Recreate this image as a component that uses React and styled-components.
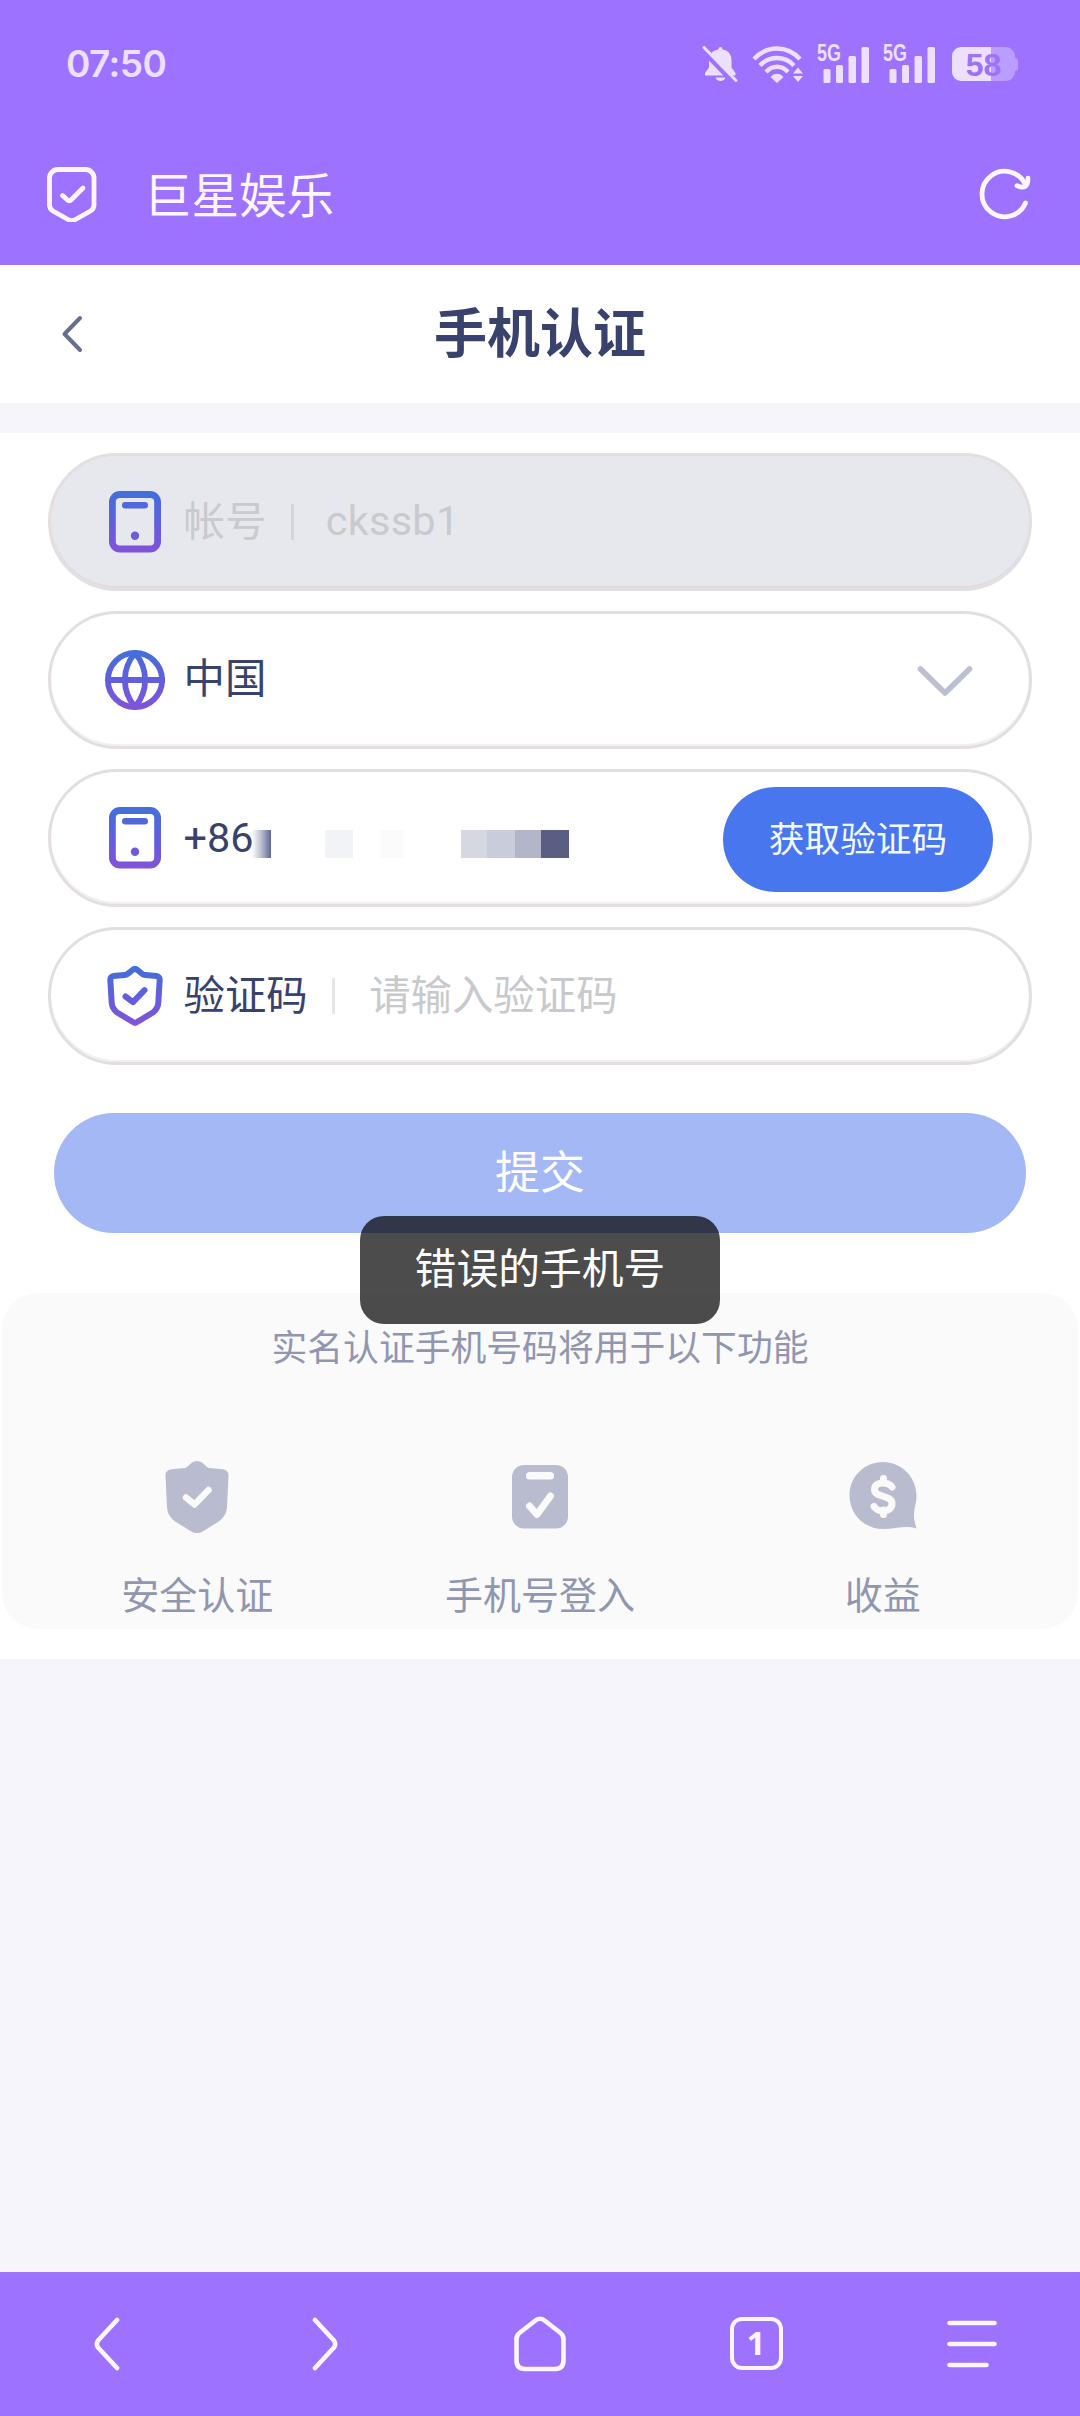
import React from "react"

import styled, { createGlobalStyle } from "styled-components"

const GlobalStyle = createGlobalStyle`
  * {
    box-sizing: border-box;
  }

  body {
    margin: 0;
    background: #f5f5fb;
    font-family: Roboto, "Noto Sans CJK SC", sans-serif;
  }

  svg {
    display: block;
    flex: none;
  }
`

const Screen = styled.div`
  width: 1080px;
  height: 2416px;
  display: flex;
  flex-direction: column;
  background: #f5f5fb;
`

const TopBar = styled.header`
  height: 265px;
  background: #9d72ff;
`

const StatusBar = styled.div`
  height: 128px;
  padding: 0 62px 0 66px;
  display: flex;
  align-items: center;
  color: #ede0ff;
`

const Time = styled.time`
  flex: 1;
  font: 600 37px/40px Inter, sans-serif;
  letter-spacing: -0.6px;
`

const StatusIcons = styled.div`
  display: flex;
  align-items: center;
`

const Signal = styled.div`
  position: relative;
  width: 53px;
  height: 38px;
  margin-left: 13px;
`

const Network = styled.span`
  position: absolute;
  top: 0;
  left: 0;
  font: 700 23px/17px "Liberation Sans", sans-serif;
  transform: scaleX(0.78);
  transform-origin: left;
`

const Battery = styled.div`
  width: 63px;
  height: 34px;
  margin-left: 16px;
  border-radius: 9px;
  background: linear-gradient(to right, #ede0ff 39px, #bb9cff 39px);
  color: #9d72f8;
  font: 700 32px/36px "Liberation Sans", sans-serif;
  text-align: center;
`

const BatteryTip = styled.i`
  width: 3px;
  height: 13px;
  border-radius: 0 3px 3px 0;
  background: #bb9cff;
`

const BrowserBar = styled.div`
  height: 130px;
  padding: 1px 48px 0 46px;
  display: flex;
  align-items: center;
`

const SiteName = styled.span`
  flex: 1;
  margin-left: 46px;
  padding-top: 6px;
  color: #fff6ff;
  font-size: 47.5px;
  line-height: 60px;
`

const PageHeader = styled.div`
  height: 138px;
  padding: 0 60px;
  display: grid;
  grid-template-columns: 60px 1fr 60px;
  align-items: center;
  background: #fff;
`

const Title = styled.h1`
  margin: 1px 0 0;
  color: #38426d;
  font-size: 53px;
  line-height: 60px;
  font-weight: 700;
  text-align: center;
`

const Content = styled.main`
  height: 1226px;
  margin-top: 30px;
  padding-top: 20px;
  background: #fff;
`

const Form = styled.form`
  padding: 0 48px;
  display: flex;
  flex-direction: column;
  gap: 20px;
`

const Field = styled.div`
  height: 138px;
  padding: 0 36px 0 54px;
  display: flex;
  align-items: center;
  border: 3px solid #e3dfe0;
  border-radius: 70px;
  background: ${({ $disabled }) => ($disabled ? "#e7e8ee" : "#fff")};
  box-shadow: inset 0 -2px 0 ${({ $disabled }) => ($disabled ? "#dddde1" : "#f1efef")};
  color: ${({ $disabled }) => ($disabled ? "#c9cacd" : "#38426d")};
  font-size: 41.4px;
  line-height: 50px;
`

const FieldIcon = styled.span`
  width: 60px;
  margin-right: 18.5px;
  display: flex;
  justify-content: center;
`

const Divider = styled.i`
  width: 3px;
  height: 36px;
  margin: 0 32px 0 24.5px;
  background: ${({ $dark }) => ($dark ? "#d4d4dc" : "#e6e6e8")};
`

const Placeholder = styled.span`
  margin-left: 2px;
  color: #c8c9cc;
`

const Value = styled.span`
  flex: 1;
  letter-spacing: ${({ $spacing }) => $spacing || 0};
  padding-bottom: 2px;
`

const Mosaic = styled.span`
  flex: 1;
  margin: 12px 0 0 -2px;
  display: flex;
`

const Tile = styled.i`
  width: ${({ $width }) => $width}px;
  height: 28px;
  margin-left: ${({ $gap }) => $gap || 0}px;
  background: ${({ $fill }) => $fill};
`

const CodeButton = styled.button`
  width: 270px;
  height: 105px;
  margin-top: 3px;
  padding: 1px 0 0;
  border: 0;
  border-radius: 53px;
  background: #4876ee;
  color: #f4fbff;
  font: 400 35.7px/44px Roboto, "Noto Sans CJK SC", sans-serif;
`

const Submit = styled.button`
  height: 120px;
  margin: 28px 6px 0;
  padding: 2px 0 0;
  border: 0;
  border-radius: 60px;
  background: #a3b8f5;
  color: #fff;
  font: 400 45px/54px Roboto, "Noto Sans CJK SC", sans-serif;
`

const Toast = styled.div`
  position: absolute;
  top: 1216px;
  left: 360px;
  width: 360px;
  height: 108px;
  display: flex;
  align-items: center;
  justify-content: center;
  border-radius: 24px;
  background: rgba(0, 0, 0, 0.7);
  color: #fff;
  font-size: 41.8px;
  line-height: 50px;
`

const Features = styled.section`
  height: 336px;
  margin: 60px 2px 0;
  padding: 34px 24px 0;
  border-radius: 36px;
  background: #fafafa;
  color: #9196b0;
`

const FeaturesTitle = styled.p`
  margin: 0;
  font-size: 35.8px;
  line-height: 44px;
  text-align: center;
`

const FeatureList = styled.div`
  margin-top: 90px;
  display: grid;
  grid-template-columns: repeat(3, 1fr);
`

const Feature = styled.div`
  display: flex;
  flex-direction: column;
  align-items: center;
  gap: 39px;
  font-size: 38px;
  line-height: 48px;
`

const NavBar = styled.nav`
  height: 144px;
  margin-top: auto;
  padding-bottom: 1px;
  display: grid;
  grid-template-columns: repeat(5, 1fr);
  align-items: center;
  justify-items: center;
  background: #9d72ff;
`

const TabCount = styled.span`
  width: 53px;
  height: 53px;
  border: 4.5px solid #fff6ff;
  border-radius: 12px;
  color: #fff6ff;
  font: 700 33px/43px "Noto Sans", sans-serif;
  text-align: center;
`

const Gradient = ({ id, y1, y2 }) => (
  <defs>
    <linearGradient id={id} gradientUnits="userSpaceOnUse" x1="0" y1={y1} x2="0" y2={y2}>
      <stop offset="0" stopColor="#4270da" />
      <stop offset="0.5" stopColor="#615fdd" />
      <stop offset="1" stopColor="#8452d8" />
    </linearGradient>
  </defs>
)

const MutedBell = () => (
  <svg width="36" height="36" viewBox="0 0 36 36" fill="#ede0ff">
    <path d="M16.500 3a1.500 1.500 0 0 1 4 0v.5c6 1 9 5 9 11v7l4 5.500v2.500H3v-2.500l4-5.500v-7c0-6 3-10 9.500-11z" />
    <path d="M13.500 31.500h10c-1 4.500-9 4.500-10 0z" />
    <path d="M0 3.500L33 37.500" stroke="#9d72ff" strokeWidth="5.500" />
    <path d="M2 1.500L34 34.500" stroke="#ede0ff" strokeWidth="3" strokeLinecap="round" />
  </svg>
)

const WifiIcon = styled.svg`
  margin-left: 14px;
`

const Wifi = () => (
  <WifiIcon width="52" height="37" viewBox="0 0 52 37" fill="none">
    <g stroke="#ede0ff" strokeWidth="4.400">
      <path d="M2 13C15 -1 35 -1 48 13" />
      <path d="M8 19.500C17 9.500 33 9.500 42 19.500" />
      <path d="M14 26C20 19 30 19 36 26" />
    </g>
    <path d="M18.500 31c3.500-4.500 9.500-4.500 13 0L25 37z" fill="#ede0ff" />
    <path d="M46 21.500l5 6H41zM46 36l5-6H41z" fill="#ede0ff" />
  </WifiIcon>
)

const SignalBars = () => (
  <Signal>
    <Network>5G</Network>
    <svg width="53" height="38" viewBox="0 0 53 38" fill="#ede0ff">
      <rect x="6.500" y="24" width="7" height="14" rx="1.500" />
      <rect x="19" y="20" width="7" height="18" rx="1.500" />
      <rect x="31.500" y="11" width="7.500" height="27" rx="1.500" />
      <rect x="44.500" y="2" width="7.500" height="36" rx="1.500" />
    </svg>
  </Signal>
)

const BrowserShield = () => (
  <svg
    width="52"
    height="56"
    viewBox="0 0 52 56"
    fill="none"
    stroke="#fff6ff"
    strokeWidth="4.800"
    strokeLinecap="round"
    strokeLinejoin="round"
  >
    <path d="M12 3.500h27.500a8.500 8.500 0 0 1 8.500 8.500v27c0 3-1 4.500-3.500 6l-15 8.500c-2.500 1.500-5 1.500-7.500 0l-15-8.500c-2.500-1.500-3.500-3-3.500-6V12a8.500 8.500 0 0 1 8.500-8.500z" />
    <path d="M16.500 29.500l5 4.500c1 1 2.500 1 3.500 0l12-12" />
  </svg>
)

const Refresh = () => (
  <svg
    width="54"
    height="54"
    viewBox="0 0 54 54"
    fill="none"
    stroke="#fff6ff"
    strokeWidth="4.800"
    strokeLinecap="round"
    strokeLinejoin="round"
  >
    <path d="M47.500 36A22.700 22.700 0 1 1 47.500 18" />
    <path d="M39 18.700c7 2.800 10.800 2.200 11-7.500" />
  </svg>
)

const PhoneIcon = ({ id }) => (
  <svg width="52" height="62" viewBox="0 0 52 62">
    <Gradient id={id} y1="0" y2="62" />
    <rect x="3.400" y="3.500" width="45.200" height="54.500" rx="7.500" fill="none" stroke={`url(#${id})`} strokeWidth="6.800" />
    <rect x="13" y="11" width="26" height="6.500" rx="3.200" fill={`url(#${id})`} />
    <circle cx="26" cy="44.800" r="4.200" fill={`url(#${id})`} />
  </svg>
)

const GlobeIcon = () => (
  <svg width="60" height="60" viewBox="0 0 60 60" fill="none">
    <Gradient id="globe" y1="0" y2="60" />
    <g stroke="url(#globe)" strokeWidth="5.800">
      <circle cx="30" cy="30" r="27.100" />
      <path d="M3 30h54v0.100H3M30 3C16.500 19 16.500 41 30 57C43.500 41 43.500 19 30 3z" />
    </g>
  </svg>
)

const ShieldIcon = () => (
  <svg width="56" height="60" viewBox="0 0 56 60" fill="none" strokeLinecap="round" strokeLinejoin="round">
    <Gradient id="shield" y1="0" y2="60" />
    <g stroke="url(#shield)" strokeWidth="6">
      <path d="M25.500 4c1.600-1.300 3.400-1.300 5 0l4.500 3.700c1 .8 2.200 1.300 3.500 1.400l11 .9c2 .2 3.300 1.600 3.200 3.700l-1.400 23c-.2 4-2 7-5 9.500L30.500 55.800c-1.700 1.400-3.300 1.400-5 0L9.700 46.200c-3-2.500-4.800-5.500-5-9.500l-1.400-23C3.200 11.600 4.500 10.200 6.500 10l11-.9c1.300-.1 2.500-.6 3.500-1.400z" />
      <path d="M18.500 30.500l7.500 5.700 11.500-12" />
    </g>
  </svg>
)

const FilledShield = () => (
  <svg width="64" height="72" viewBox="0 0 64 72">
    <path
      fill="#b9bccf"
      d="M27 1.500c3.200-2 6.800-2 10 0 2.500 1.600 4 4.500 7 5.500l13.500 1.200c4 .4 6.200 2.800 6 6.800L62 46c-.4 7-4 11.500-9 15l-14.500 9c-4.500 3-8.500 3-13 0L11 61C6 57.500 2.400 53 2 46L.5 15c-.2-4 2-6.400 6-6.800L20 7c3-1 4.500-3.900 7-5.500z"
    />
    <path d="M21 36.500l8.500 7L43.500 29" fill="none" stroke="#fafafa" strokeWidth="6.500" strokeLinecap="round" strokeLinejoin="round" />
  </svg>
)

const FilledPhone = () => (
  <svg width="56" height="72" viewBox="0 0 56 72">
    <rect y="4" width="56" height="63.500" rx="12" fill="#b9bccf" />
    <rect x="14" y="11" width="28" height="7.500" rx="3.500" fill="#fafafa" />
    <path d="M17.500 45l7.500 8.500L38.500 35" fill="none" stroke="#fafafa" strokeWidth="7" strokeLinecap="round" strokeLinejoin="round" />
  </svg>
)

const FilledCoin = () => (
  <svg width="68" height="72" viewBox="0 0 68 72">
    <path d="M34 1C52.500 1 67.500 16 67.500 35c0 7-2.500 12-2.500 20 0 5 1.500 8.500 2.500 12.500-11-3.500-21 .5-33.500.5C15.500 68 .5 53.500.5 34.500S15.500 1 34 1z" fill="#b9bccf" />
    <path
      d="M43 26c-2.500-5-17.500-6.500-17.500 2.500 0 8.500 17.500 5 17.500 14 0 9.500-14.500 9-18 3M34.500 17.500V22M34.500 49v4.500"
      fill="none"
      stroke="#fafafa"
      strokeWidth="7"
      strokeLinecap="round"
    />
  </svg>
)

const LineIcon = ({ width, height, d, color, stroke }) => (
  <svg
    width={width}
    height={height}
    viewBox={`0 0 ${width} ${height}`}
    fill="none"
    stroke={color}
    strokeWidth={stroke}
    strokeLinecap="round"
    strokeLinejoin="round"
  >
    <path d={d} />
  </svg>
)

const tiles = [
  { $width: 19, $fill: "linear-gradient(to right, #fff, #b9bccd 50%, #606794)" },
  { $width: 28, $gap: 54, $fill: "#f2f3f6" },
  { $width: 26, $gap: 26, $fill: "#fbfbfc" },
  { $width: 26, $gap: 56, $fill: "#d5d8e0" },
  { $width: 28, $fill: "#c9cddb" },
  { $width: 26, $fill: "#b2b6c8" },
  { $width: 28, $fill: "#5b5d83" },
]

const features = [
  { label: "安全认证", Icon: FilledShield },
  { label: "手机号登入", Icon: FilledPhone },
  { label: "收益", Icon: FilledCoin },
]

function App() {
  return (
    <Screen>
      <GlobalStyle />
      <TopBar>
        <StatusBar>
          <Time>07:50</Time>
          <StatusIcons>
            <MutedBell />
            <Wifi />
            <SignalBars />
            <SignalBars />
            <Battery>58</Battery>
            <BatteryTip />
          </StatusIcons>
        </StatusBar>
        <BrowserBar>
          <BrowserShield />
          <SiteName>巨星娱乐</SiteName>
          <Refresh />
        </BrowserBar>
      </TopBar>
      <PageHeader>
        <LineIcon width={24} height={40} d="M20 4L4.500 20 20 36" color="#666f92" stroke={4} />
        <Title>手机认证</Title>
      </PageHeader>
      <Content>
        <Form>
          <Field $disabled>
            <FieldIcon>
              <PhoneIcon id="account" />
            </FieldIcon>
            帐号
            <Divider $dark />
            <Value $spacing="0.3px">ckssb1</Value>
          </Field>
          <Field>
            <FieldIcon>
              <GlobeIcon />
            </FieldIcon>
            <Value>中国</Value>
            <LineIcon width={88} height={36} d="M15.500 7L40 31 64.500 7" color="#bcbfd1" stroke={5.6} />
          </Field>
          <Field>
            <FieldIcon>
              <PhoneIcon id="mobile" />
            </FieldIcon>
            +86
            <Mosaic>
              {tiles.map((tile, index) => (
                <Tile key={index} {...tile} />
              ))}
            </Mosaic>
            <CodeButton type="button">获取验证码</CodeButton>
          </Field>
          <Field>
            <FieldIcon>
              <ShieldIcon />
            </FieldIcon>
            验证码
            <Divider />
            <Placeholder>请输入验证码</Placeholder>
          </Field>
          <Submit type="button">提交</Submit>
        </Form>
        <Features>
          <FeaturesTitle>实名认证手机号码将用于以下功能</FeaturesTitle>
          <FeatureList>
            {features.map(({ label, Icon }) => (
              <Feature key={label}>
                <Icon />
                {label}
              </Feature>
            ))}
          </FeatureList>
        </Features>
      </Content>
      <NavBar>
        <LineIcon width={28} height={56} d="M23 4L4.500 24Q1 28 4.500 32L23 52" color="#fff6ff" stroke={4.6} />
        <LineIcon width={28} height={56} d="M5 4L23.500 24Q27 28 23.500 32L5 52" color="#fff6ff" stroke={4.6} />
        <LineIcon
          width={56}
          height={58}
          d="M23.500 5.500Q28 2 32.500 5.500L48 17.500Q51.500 20 51.500 24V45Q51.500 54 43 54H13Q4.500 54 4.500 45V24Q4.500 20 8 17.500z"
          color="#fff6ff"
          stroke={4.6}
        />
        <TabCount>1</TabCount>
        <LineIcon width={54} height={50} d="M4.500 4H49.500M4.500 25H49.500M4.500 46H41.500" color="#fff6ff" stroke={4.6} />
      </NavBar>
      <Toast role="alert">错误的手机号</Toast>
    </Screen>
  )
}

export default App
